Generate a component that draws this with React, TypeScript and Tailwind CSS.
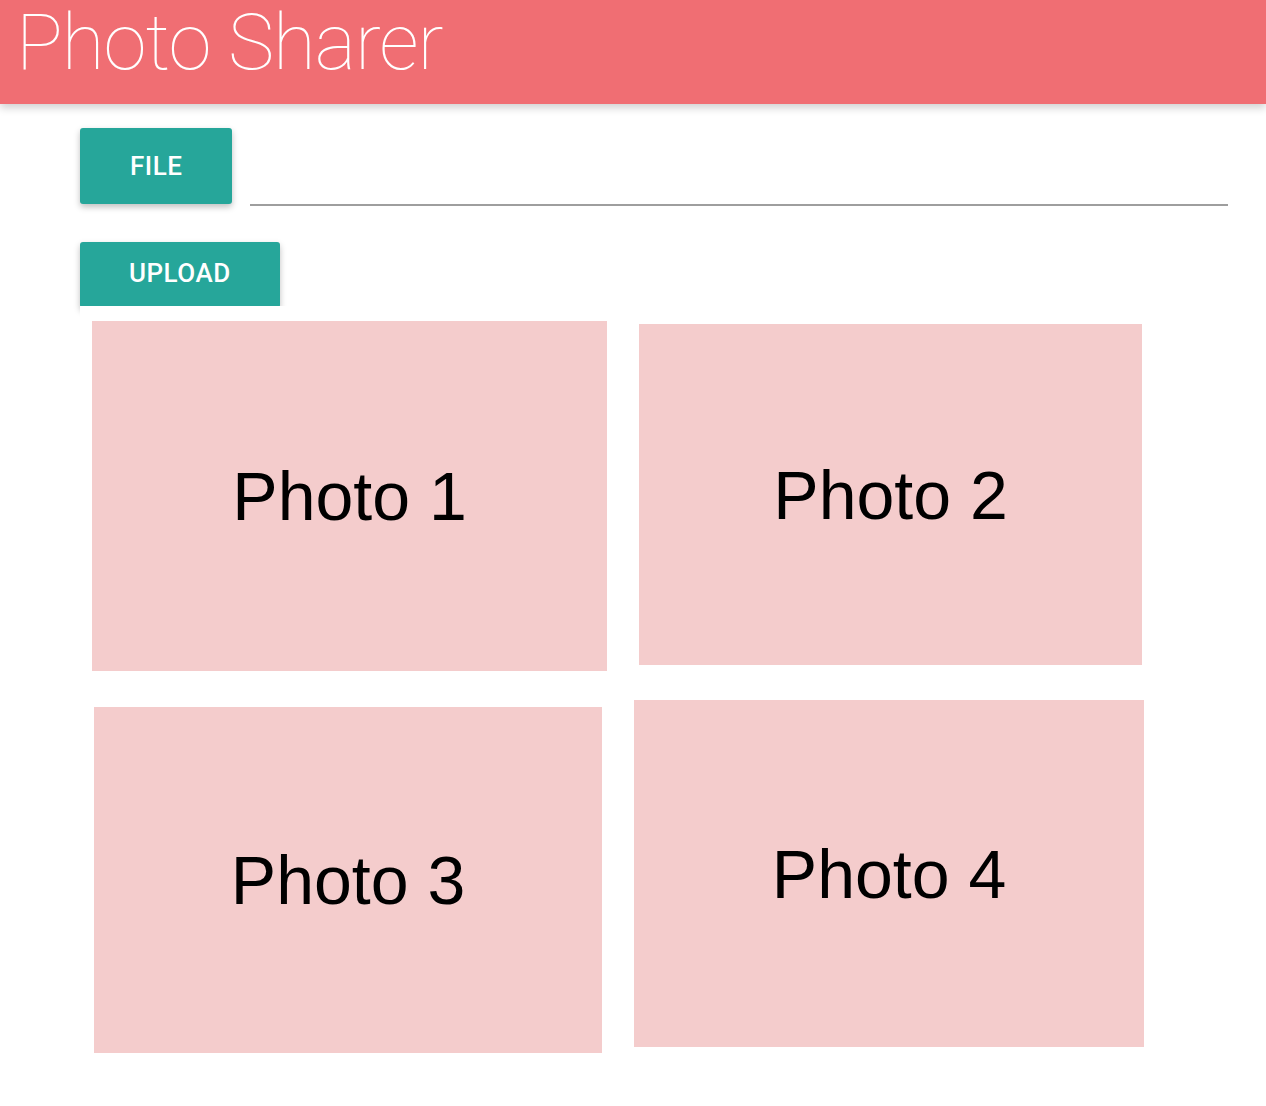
import React from "react";

type Photo = { label: string; w: number; h: number; mt: number; ml: number };

const photos: Photo[] = [
  { label: "Photo 1", w: 515, h: 350, mt: 15, ml: 12 },
  { label: "Photo 2", w: 503, h: 341, mt: 18, ml: 19 },
  { label: "Photo 3", w: 508, h: 346, mt: 36, ml: 14 },
  { label: "Photo 4", w: 510, h: 347, mt: 29, ml: 14 },
];

export default function App() {
  return (
    <div className="min-h-[1106px] bg-white" style={{ fontFamily: "Roboto, 'Noto Sans', sans-serif" }}>
      <header className="relative z-10 h-[104px] bg-[#f06e73] shadow-[0_4px_8px_rgba(0,0,0,0.18)]">
        <h1 className="inline-block whitespace-nowrap pl-[16px] text-[78px] leading-[86px] font-thin tracking-[-1px] text-white">
          Photo Sharer
        </h1>
      </header>

      <main className="pl-[80px] pr-[38px] pt-[24px]">
        <div className="flex items-start gap-[18px]">
          <button className="h-[76px] shrink-0 rounded-[3px] bg-[#26a69a] px-[50px] text-[26px] font-medium tracking-[0.5px] text-white shadow-[0_3px_6px_rgba(0,0,0,0.25)]">
            FILE
          </button>
          <div className="h-[78px] flex-1 border-b-2 border-[#9e9e9e]" />
        </div>

        <div className="mt-[36px]">
          <button className="h-[66px] rounded-[3px] bg-[#26a69a] px-[49px] pb-[4px] text-[26px] font-medium tracking-[0.5px] text-white shadow-[0_3px_6px_rgba(0,0,0,0.25)]">
            UPLOAD
          </button>
        </div>

        <div className="relative -mt-[2px] grid w-[1080px] grid-cols-2 bg-white pb-[40px]">
          {photos.map((p) => (
            <div key={p.label} className="flex items-start justify-start">
              <div
                className="flex items-center justify-center bg-[#f4cccc] text-[68px] text-black"
                style={{
                  width: p.w,
                  height: p.h,
                  marginTop: p.mt,
                  marginLeft: p.ml,
                  fontFamily: "'Liberation Sans', Arial, sans-serif",
                }}
              >
                {p.label}
              </div>
            </div>
          ))}
        </div>
      </main>
    </div>
  );
}
